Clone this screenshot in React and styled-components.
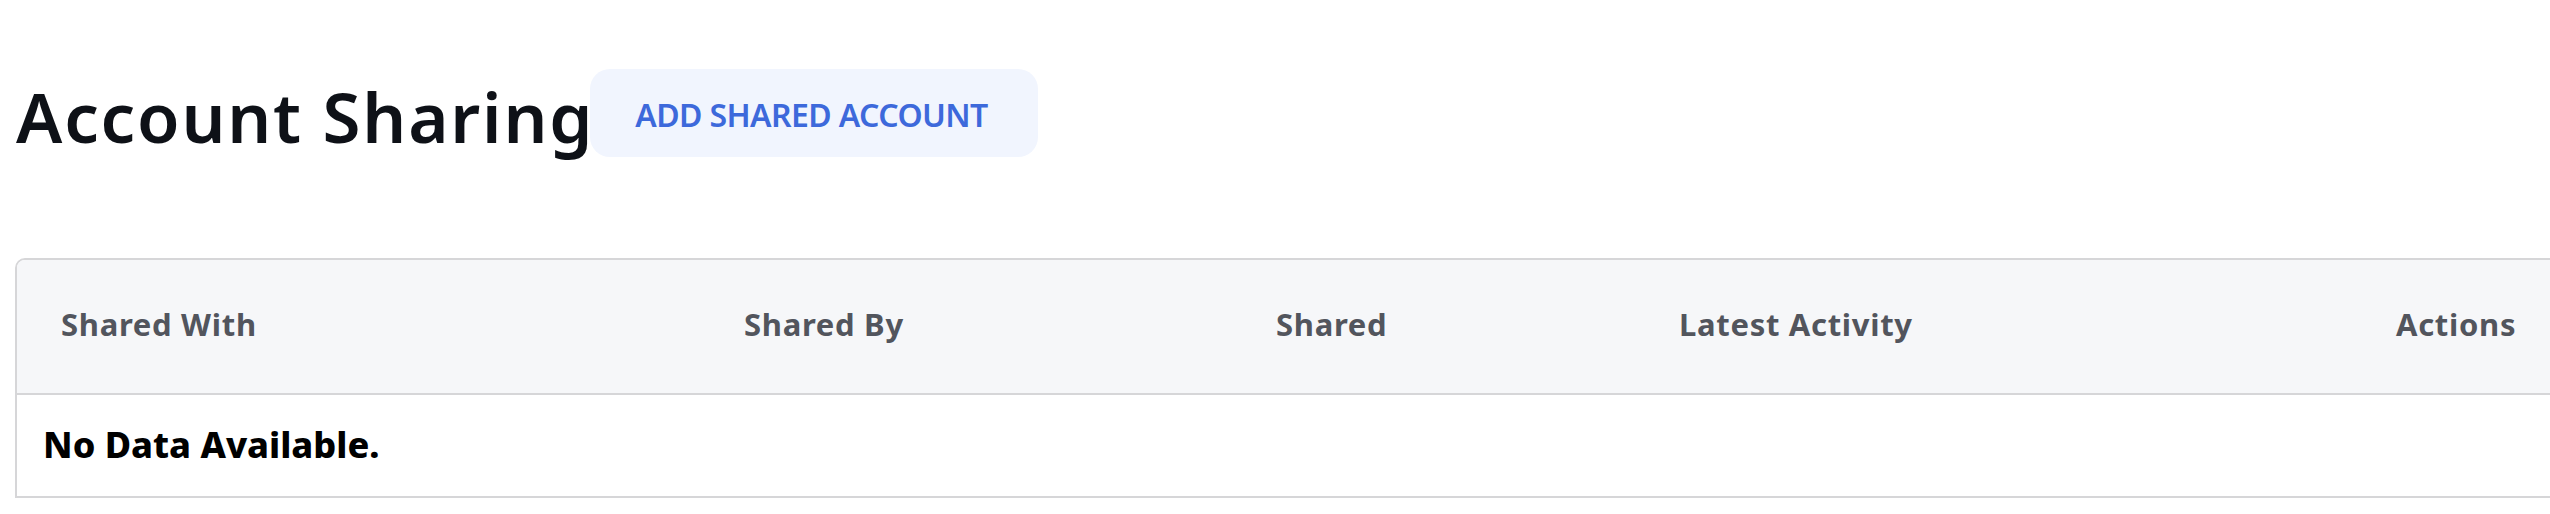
import React from "react";
import styled, { createGlobalStyle } from "styled-components";

const GlobalStyle = createGlobalStyle`
  body {
    margin: 0;
    background: #ffffff;
    font-family: "Noto Sans", "Open Sans", sans-serif;
  }
`;

const columns = ["Shared With", "Shared By", "Shared", "Latest Activity", "Actions"];

const App = () => {
  return (
    <Page>
      <GlobalStyle />
      <Header>
        <Title>Account Sharing</Title>
        <AddButton type="button">ADD SHARED ACCOUNT</AddButton>
      </Header>

      <Table>
        <HeadRow>
          {columns.map((c) => (
            <HeadCell key={c}>{c}</HeadCell>
          ))}
        </HeadRow>
        <BodyRow>
          <EmptyCell>No Data Available.</EmptyCell>
        </BodyRow>
      </Table>
    </Page>
  );
};

const Page = styled.div`
  width: 100%;
  overflow: hidden;
  padding: 69px 0 0 15px;
  box-sizing: border-box;
`;

const Header = styled.div`
  display: flex;
  flex-direction: row;
  align-items: flex-start;
`;

const Title = styled.h1`
  margin: 3px -4px 0 1px;
  font-size: 69px;
  line-height: 88px;
  font-weight: 600;
  letter-spacing: 1.8px;
  color: #0e1117;
  white-space: nowrap;
`;

const AddButton = styled.button`
  height: 88px;
  padding: 2px 50px 0 45px;
  border: none;
  border-radius: 20px;
  background: #f1f5fe;
  color: #3d69db;
  font-family: "Noto Sans", "Open Sans", sans-serif;
  font-size: 32px;
  font-weight: 600;
  letter-spacing: -0.6px;
  white-space: nowrap;
  cursor: pointer;
`;

const Table = styled.div`
  width: 2546px;
  margin-top: 98px;
  border: 2px solid #d6d6d8;
  border-radius: 10px 10px 0 0;
  overflow: hidden;
`;

const HeadRow = styled.div`
  display: grid;
  grid-template-columns: 683px 532px 403px 717px 1fr;
  height: 133px;
  background: #f6f7f9;
  border-bottom: 2px solid #d6d6d8;
`;

const HeadCell = styled.div`
  display: flex;
  align-items: center;
  padding: 0 0 5px 44px;
  font-size: 31px;
  font-weight: 700;
  letter-spacing: 0.7px;
  color: #52555d;
  white-space: nowrap;
`;

const BodyRow = styled.div`
  display: flex;
  align-items: center;
  height: 101px;
`;

const EmptyCell = styled.div`
  padding: 0 0 2px 26px;
  font-size: 36px;
  font-weight: 800;
  color: #000000;
`;

export default App;
